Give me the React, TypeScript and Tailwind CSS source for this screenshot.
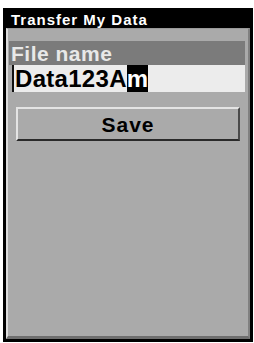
import React from 'react';

const App = () => {
  return <div className="w-[254px] h-[343px] bg-white pt-[8px] pl-[3px]" style={{ fontFamily: '"Liberation Sans", Arial, sans-serif' }}>
      <div className="w-[250px] h-[334px] bg-black p-[3px] flex flex-col">
        {/* Title bar */}
        <div className="h-[17px] flex items-center pl-[5px] pb-[1px] text-white font-bold text-[15px] leading-none tracking-[1px]">
          Transfer My Data
        </div>
        {/* Body */}
        <div className="flex-1 bg-[#aaaaaa] border-l-[2px] border-l-[#dcdcdc] border-b-[3px] border-b-[#6e6e6e] border-r-[2px] border-r-[#808080] border-t-[1px] border-t-[#999999] pt-[12px] pl-[1px] pr-[3px] flex flex-col">
          <div className="h-[24px] bg-[#7b7b7b] flex items-center pl-[2px] text-[#e8e8e8] font-bold text-[21px] leading-none tracking-[0.5px]">
            File name
          </div>
          <div className="ml-[3px] h-[27px] bg-[#ececec] border-l-[2px] border-l-[#111111] flex items-stretch pl-[1px] text-black font-bold text-[24px] leading-none tracking-[0.3px]">
            <span className="flex items-center">Data123A</span>
            <span className="bg-black text-white flex items-center">m</span>
          </div>
          <div className="mt-[15px] ml-[7px] mr-[5px] h-[34px] border-t-[2px] border-l-[2px] border-t-[#e4e4e4] border-l-[#e4e4e4] border-b-[2px] border-r-[2px] border-b-[#2a2a2a] border-r-[#4a4a4a] bg-[#aaaaaa] flex items-center justify-center text-black font-bold text-[21px] leading-none tracking-[1px]">
            Save
          </div>
        </div>
      </div>
    </div>;
};

export default App;
